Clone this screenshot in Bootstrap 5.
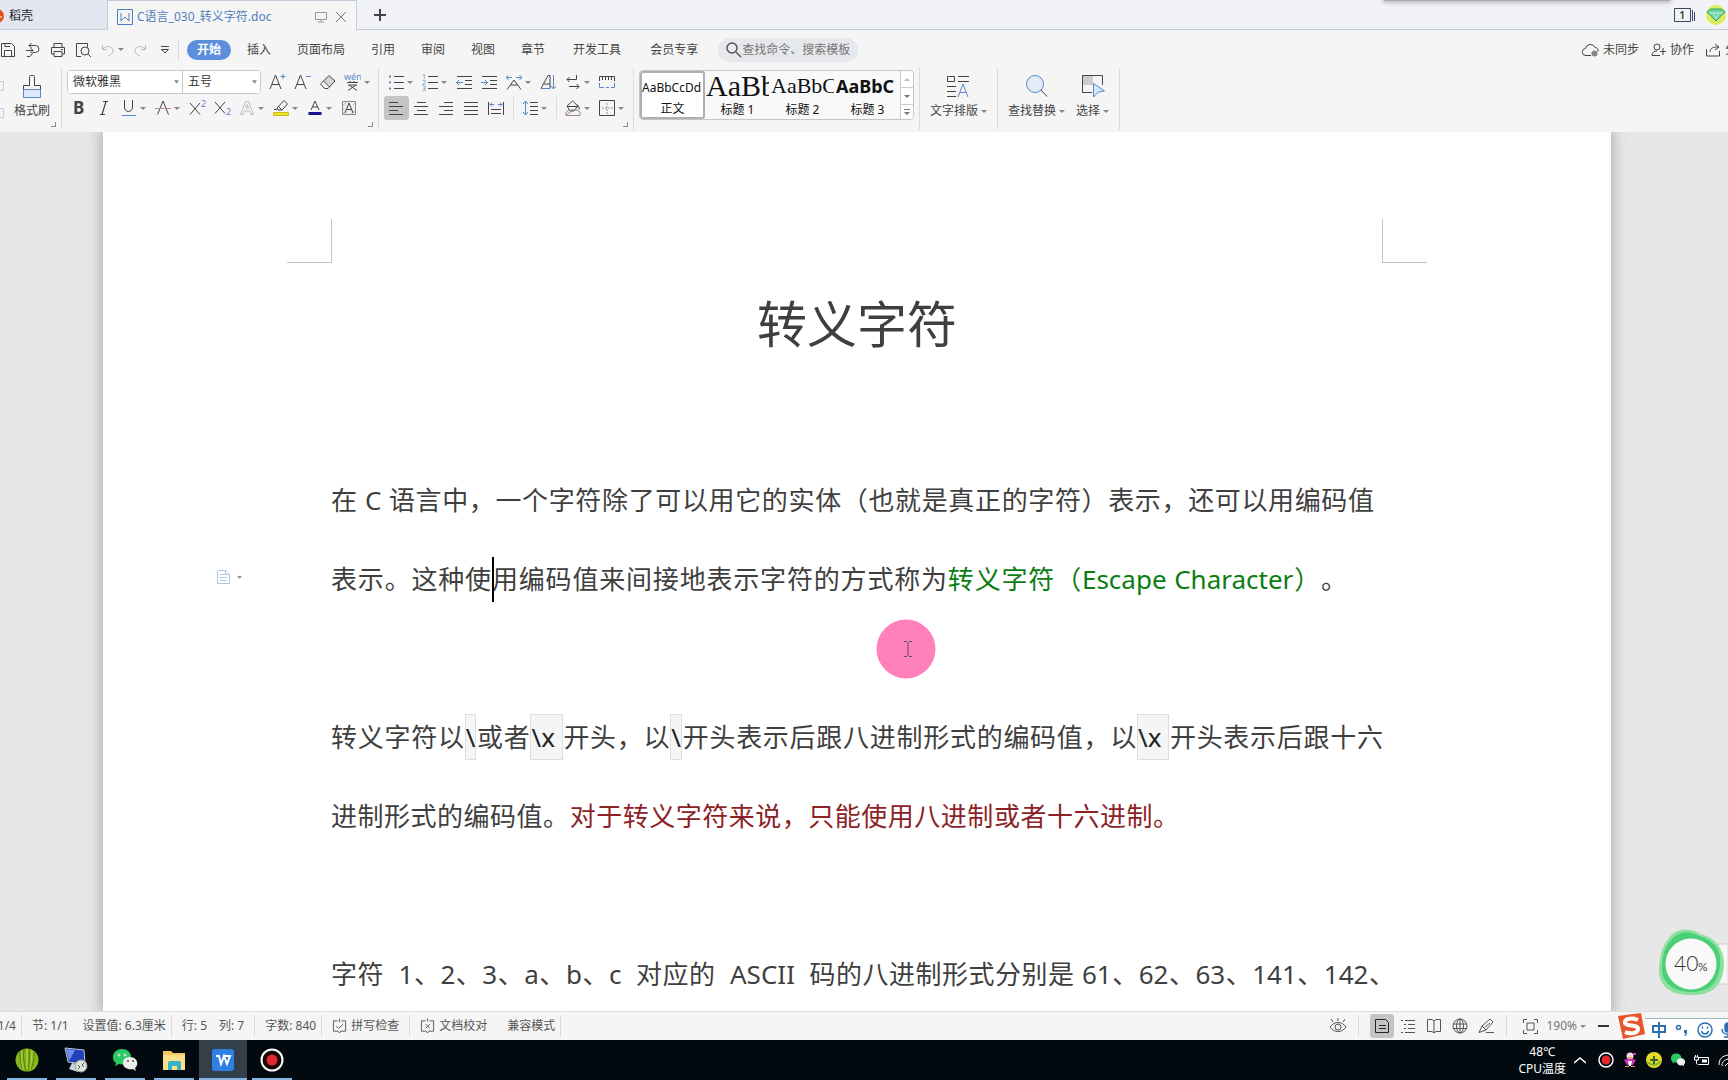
<!DOCTYPE html>
<html lang="zh-CN">
<head>
<meta charset="utf-8">
<meta name="viewport" content="width=device-width, initial-scale=1">
<title>C语言_030_转义字符.doc</title>
<link href="https://cdn.jsdelivr.net/npm/bootstrap@5.3.0/dist/css/bootstrap.min.css" rel="stylesheet">
<style>
  :root { --ui: "Noto Sans", "Noto Sans CJK SC", sans-serif; --line: #dcdcdc; --ink: #444; --blue: #5b87c5; }
  body { font-family: var(--ui); font-size: 12px; line-height: 16px; color: var(--ink); background: #e7e7e7; }
  svg { display: block; flex: none; fill: none; }
  svg:not([stroke]) { stroke: currentColor; }
  svg text { stroke: none; fill: currentColor; font-family: var(--ui); }
  button { font: inherit; color: inherit; background: none; border: 0; padding: 0; }
  .vr-line { width: 1px; background: var(--line); flex: none; }
  .caret::after { content: ""; border: 3px solid transparent; border-top-color: #888; border-bottom: 0; flex: none; margin-left: 3px; }

  /* tab strip */
  .tabstrip { height: 30px; background: #f0f2f6; border-bottom: 1px solid #c3ccdb; }
  .tab-home { width: 107px; height: 29px; padding-top: 3px; background: #e3e6ef; overflow: hidden; }
  .tab-doc { width: 250px; height: 30px; background: #f5f5f5; border: 1px solid #c3ccdb; border-bottom: 0; padding: 2px 9px 0; color: #5080bb; }
  .floatbar { right: 58px; width: 286px; height: 1px; background: #aaa; box-shadow: 0 0 4px 1px #999; }

  /* menu */
  .menubar { height: 38px; background: #f5f5f5; padding-top: 1px; }
  .quick { gap: 9px; width: 178px; }
  .menus { gap: 26px; margin-left: 26px; }
  .menus.wide { gap: 29px; margin-left: 28px; margin-right: 20px; }
  .menu-link { color: var(--ink); text-decoration: none; }
  .menu-link.current { background: #5b8edb; color: #fff; font-weight: 600; border-radius: 10px; padding: 2px 10px; }
  .finder { background: #e6e8ec; border-radius: 12px; width: 140px; height: 24px; padding: 0 8px; }
  .finder input { border: 0; background: none; padding: 0; width: 110px; font-size: 12px; outline: 0; color: #666; }
  .finder input::placeholder { color: #757575; opacity: 1; }

  /* ribbon */
  .ribbon { height: 64px; background: #f5f5f5; }
  .ribbon > .vr-line { height: 62px; }
  .grp { height: 62px; padding: 2px 0 0 5px; position: relative; flex: none; }
  .grp.launch::after { content: ""; position: absolute; right: 5px; bottom: 3px; width: 5px; height: 5px; border: solid #888; border-width: 0 1px 1px 0; }
  .tool-row { height: 24px; margin-bottom: 2px; }
  .tb { width: 25px; height: 24px; padding-left: 4px; display: flex; align-items: center; border-radius: 3px; flex: none; }
  .tb.caret { width: 34px; }
  .tb.on { background: #c4c4c4; }
  .combo { width: 194px; height: 24px; margin-right: 4px; border: 1px solid #c8c8c8; border-radius: 4px; background: #fff; overflow: hidden; flex: none; }
  .combo select { font-size: 12px; line-height: 18px; padding: 2px 14px 2px 5px; border: 0; border-radius: 0; color: #333; min-height: 0; background-color: #fff;
    background-image: url("data:image/svg+xml,%3Csvg xmlns='http://www.w3.org/2000/svg' viewBox='0 0 6 4'%3E%3Cpath d='M0 0h6L3 4z' fill='%23888'/%3E%3C/svg%3E"); background-size: 5px 4px; background-position: right 3px center; }
  .combo .face { width: 115px; border-right: 1px solid #c8c8c8; }
  .combo .pts { flex: 1; }
  .gallery { width: 275px; height: 50px; border: 1px solid #c4c4c4; border-radius: 4px; overflow: hidden; background: #f9f9f9; color: #111; }
  .sty { width: 65px; height: 48px; overflow: hidden; white-space: nowrap; display: flex; flex-direction: column; justify-content: space-between; align-items: stretch; padding: 0 1px 1px; color: #111; }
  .sty.on { border: 2px solid #b0b0b0; border-radius: 3px; padding: 0; background: #fff; }
  .sty b, .sty i { font-style: normal; font-weight: 400; height: 30px; line-height: 30px; overflow: hidden; text-align: left; }
  .big { height: 50px; display: flex; flex-direction: column; align-items: center; justify-content: space-between; padding: 2px 0 1px; white-space: nowrap; }

  /* document */
  .canvas { background: #e7e7e7; padding-right: 14px; }
  .sheet { width: 1508px; flex: none; background: #fff; box-shadow: 0 0 12px 3px #b4b4b4; padding: 87px 184px 0; color: #3f3f3f; }
  .crop { width: 45px; height: 44px; border: solid #c4c4c4; border-width: 0 1px 1px 0; }
  .crop.r { border-width: 0 0 1px 1px; }
  .prose { padding: 0 44px; font-size: 26px; text-spacing-trim: space-all; }
  .prose h1 { font-size: 50px; line-height: 80px; font-weight: 400; margin: 21px 0 97px; text-align: center; }
  .prose p { line-height: 79px; margin: 0 0 79px; }
  .ln { display: block; text-align: justify; text-align-last: justify; white-space: nowrap; position: relative; }
  .end-s { padding-right: 9px; }
  .end-a { padding-right: 36px; }
  .end-b { padding-right: 204px; }
  .hang { margin-right: -12px; }
  .esc { background: #f5f5f5; border: 1px solid #dedede; padding: 4px 0; line-height: 36px; display: inline-block; color: #222; white-space: pre; text-align-last: left; }
  .term { color: #0b7d12; }
  .warn { color: #8c2226; }
  .ibeam { position: relative; }
  .ibeam::after { content: ""; position: absolute; left: 0; top: -4px; width: 2px; height: 45px; background: #000; }
  .para-mark { left: -114px; top: 29px; }
  .pointer { left: 545px; top: 79px; }
  .gauge { right: 1px; bottom: 12px; }

  /* status + taskbar */
  .status { height: 29px; background: #f5f5f5; border-top: 1px solid #ddd; color: #555; white-space: nowrap; }
  .status .vr-line { height: 22px; }
  .cell { padding: 0 10px; display: flex; align-items: center; gap: 4px; }
  .cell.tight { padding-right: 5px; }
  .view { width: 24px; height: 24px; display: flex; align-items: center; justify-content: center; border-radius: 3px; }
  .view.on { background: #c4c4c4; }
  .ime { width: 83px; height: 22px; background: #fff; border-top: 1px solid #9bb; color: #2b70b5; padding-left: 6px; }
  .taskbar { height: 40px; background: #020a10; color: #fff; padding-left: 7px; }
  .app { width: 40px; height: 40px; margin-right: 9px; border-bottom: 2px solid #85b4e0; display: flex; align-items: center; justify-content: center; padding-top: 1px; }
  .app.on { width: 48px; background: #33404a; margin-right: 5px; margin-left: -4px; }
</style>
</head>
<body class="d-flex flex-column vh-100 overflow-hidden">

<header>
  <div class="tabstrip d-flex position-relative">
    <a href="#" class="tab-home d-flex align-items-center text-decoration-none text-dark">
      <svg width="9" height="16" viewBox="0 0 9 16"><circle cx="-3" cy="8" r="7" fill="#e2521b" stroke="none"/><path d="M0 9l2 0" stroke="#fff"/></svg>稻壳</a>
    <div class="tab-doc d-flex align-items-center">
      <svg width="16" height="16" viewBox="0 0 16 16" stroke="#5080bb"><path d="M.5.5h15v15H.5z"/><path d="M4 4v8l4-4 4 4V4" /></svg>
      <span class="ms-1 me-auto">C语言_030_转义字符.doc</span>
      <svg width="12" height="12" viewBox="0 0 12 12" stroke="#999"><path d="M.5 1.500h11v7H.5zM6 8.500v2M3 11h6"/></svg>
      <button class="ms-2" aria-label="关闭"><svg width="12" height="12" viewBox="0 0 12 12" stroke="#777"><path d="M1 1l10 10M11 1L1 11"/></svg></button>
    </div>
    <button class="ms-3" aria-label="新建"><svg width="14" height="14" viewBox="0 0 14 14" stroke="#444" stroke-width="2"><path d="M7 1v12M1 7h12"/></svg></button>
    <div class="d-flex align-items-center ms-auto gap-2">
      <svg width="22" height="16" viewBox="0 0 22 16" stroke="#3a4766"><path d="M.5 1.500h16v13H.5zM18.500 3v11M20.500 5v9"/><text x="5" y="12" font-size="11" font-weight="600">1</text></svg>
      <svg width="24" height="20" viewBox="0 0 24 20"><circle cx="12" cy="10" r="10" fill="#dcec5a" stroke="none"/><path d="M3 7l4-3h10l4 3-9 9z" fill="#6cd3a0" stroke="#2f9e73"/><path d="M5 8h14M9 8l3 6 3-6" stroke="#c6f3dd"/></svg>
    </div>
    <div class="floatbar position-absolute top-0"></div>
  </div>

  <nav class="menubar d-flex align-items-center">
    <div class="quick d-flex align-items-center flex-shrink-0">
      <button aria-label="保存"><svg width="16" height="16" viewBox="0 0 16 16"><path d="M1.500 1.500h10l3 3v10h-13zM4.500 14V8.500h7V14M5 1.500v3h5"/></svg></button>
      <button aria-label="输出"><svg width="16" height="16" viewBox="0 0 16 16"><path d="M4 3.500h6.500a3.500 3.500 0 010 7H8M1 8.500h7M5.500 6L8 8.500 5.500 11M6.500 1L4 3.500 6.500 6M2 14.500h3l3-4"/></svg></button>
      <button aria-label="打印"><svg width="16" height="16" viewBox="0 0 16 16"><path d="M4 5V1.500h8V5M4 12H1.500V5.500h13V12H12M4 9.500h8v5H4zM11 7.500h2"/></svg></button>
      <button aria-label="打印预览"><svg width="17" height="16" viewBox="0 0 17 16"><path d="M6 14.500H1.500v-13h11V5M16 15l-3-3"/><circle cx="10" cy="9" r="4"/></svg></button>
      <button aria-label="撤销" class="caret d-flex align-items-center"><svg width="14" height="14" viewBox="0 0 14 14" stroke="#bbb"><path d="M1.500 2v4.500H6M2 6c3-4 10-3 10 2 0 2-2 4-5 5"/></svg></button>
      <button aria-label="重做"><svg width="14" height="14" viewBox="0 0 14 14" stroke="#bbb"><path d="M12.500 2v4.500H8M12 6C9 2 2 3 2 8c0 2 2 4 5 5"/></svg></button>
      <button class="ms-1" aria-label="更多"><svg width="10" height="10" viewBox="0 0 10 10"><path d="M1 1.500h8M1.500 4.500L5 8l3.500-3.500z"/></svg></button>
    </div>
    <div class="vr-line me-2" style="height:22px"></div>
    <a href="#" class="menu-link current">开始</a>
    <a href="#" class="menu-link ms-3">插入</a>
    <div class="d-flex menus">
      <a href="#" class="menu-link">页面布局</a><a href="#" class="menu-link">引用</a><a href="#" class="menu-link">审阅</a><a href="#" class="menu-link">视图</a><a href="#" class="menu-link">章节</a>
    </div>
    <div class="d-flex menus wide">
      <a href="#" class="menu-link">开发工具</a><a href="#" class="menu-link">会员专享</a>
    </div>
    <div class="finder d-flex align-items-center">
      <label for="cmd"><svg width="16" height="16" viewBox="0 0 16 16" stroke="#555" stroke-width="1.500"><circle cx="6" cy="6" r="5"/><path d="M10 10l5 5"/></svg></label>
      <input id="cmd" type="text" placeholder="查找命令、搜索模板">
    </div>
    <div class="d-flex align-items-center ms-auto gap-1 text-nowrap">
      <svg width="17" height="14" viewBox="0 0 17 14"><path d="M9 12.500H4a3.500 3.500 0 01-.5-7 5 5 0 019.500-1 3.500 3.500 0 013 4"/><circle cx="12.500" cy="10.500" r="3" fill="#888" stroke="none"/></svg>
      <a href="#" class="menu-link me-2">未同步</a>
      <svg width="15" height="14" viewBox="0 0 15 14"><circle cx="6" cy="4" r="3"/><path d="M9 12.500H1C1 9.500 3 8 6 8M12 5v7M9 8.500h6"/></svg>
      <a href="#" class="menu-link me-2">协作</a>
      <svg width="15" height="14" viewBox="0 0 15 14"><path d="M.5 6v7h13V8M4 9c0-4 3-5 8-5M9 1l4 3-4 3"/></svg>
      <a href="#" class="menu-link overflow-hidden" style="width:3px">分享</a>
    </div>
  </nav>

  <div class="ribbon d-flex align-items-start">
    <div class="d-flex grp launch ps-0" style="width:61px">
      <svg width="6" height="50" viewBox="0 0 6 50" stroke="#ccc"><path d="M0 11.500h3.500v9H0M0 38.500h3.500v9H0"/></svg>
      <button class="big ms-2"><svg width="20" height="26" viewBox="0 0 20 26"><path d="M1.500 18V13.500h6v-9a1 1 0 011-1h3a1 1 0 011 1v9h6V18"/><path d="M1.500 17.500h17v8h-17z" fill="#dfeaf8" stroke="#5b87c5"/></svg><span>格式刷</span></button>
    </div>
    <div class="vr-line"></div>

    <div class="grp launch" style="width:316px">
      <div class="d-flex tool-row">
        <div class="combo d-flex">
          <label class="visually-hidden" for="face">字体</label>
          <select id="face" class="form-select face"><option>微软雅黑</option></select>
          <label class="visually-hidden" for="pts">字号</label>
          <select id="pts" class="form-select pts"><option>五号</option></select>
        </div>
        <button class="tb" aria-label="增大字号"><svg width="17" height="18" viewBox="0 0 17 18"><path d="M1 16L6.500 2 12 16M3 11.500h7"/><path d="M11.500 3.500h5M14 1v5" stroke="#5b87c5"/></svg></button>
        <button class="tb" aria-label="减小字号"><svg width="17" height="18" viewBox="0 0 17 18"><path d="M1 16L6.500 2 12 16M3 11.500h7"/><path d="M12 3.500h5" stroke="#5b87c5"/></svg></button>
        <button class="tb" aria-label="清除格式"><svg width="17" height="16" viewBox="0 0 17 16"><path d="M10 1.500l6 5.500-5.500 6-6-6z" fill="#d5d5d5"/><path d="M4.500 7L1.500 10l4 4.500H9l1.500-1.500"/></svg></button>
        <button class="tb caret" aria-label="拼音指南"><svg width="17" height="18" viewBox="0 0 17 18"><text x="0" y="7" font-size="9" style="fill:#5b87c5">wén</text><path d="M3 9.500h11M4 12h9M6 8v2M10 8v2M5 12l8 5.500M12 12l-8 5.500"/></svg></button>
      </div>
      <div class="d-flex tool-row">
        <button class="tb" aria-label="加粗"><svg width="16" height="18" viewBox="0 0 16 18"><text x="2" y="15" font-size="17" font-weight="700">B</text></svg></button>
        <button class="tb" aria-label="倾斜"><svg width="16" height="16" viewBox="0 0 16 16"><path d="M7 1.500h5M4 14.500h5M10 1.500l-4 13" stroke-width="1.200"/></svg></button>
        <button class="tb caret" aria-label="下划线"><svg width="16" height="16" viewBox="0 0 16 16"><path d="M3.500 0v7c0 6 8 6 8 0V0"/><path d="M1 15.500h14" stroke="#5b87c5"/></svg></button>
        <button class="tb caret" aria-label="删除线"><svg width="16" height="16" viewBox="0 0 16 16"><path d="M2.500 14.500L8 1l5.500 13.500"/><path d="M0 8.500h16" stroke="#b98a80"/></svg></button>
        <button class="tb" aria-label="上标"><svg width="18" height="16" viewBox="0 0 18 16"><path d="M1 3l10 11.500M11 3L1 14.500"/><text x="12" y="7" font-size="9" style="fill:#5b87c5">2</text></svg></button>
        <button class="tb" aria-label="下标"><svg width="18" height="16" viewBox="0 0 18 16"><path d="M1 2l10 11.500M11 2L1 13.500"/><text x="12" y="15" font-size="9" style="fill:#5b87c5">2</text></svg></button>
        <button class="tb caret" aria-label="文字效果"><svg width="16" height="16" viewBox="0 0 16 16" stroke="#bbb"><path d="M1.500 14.500L6.500 1.500h3l5 13H12L10.500 11h-5L4 14.500zM6.500 8h3L8 4.500z"/></svg></button>
        <button class="tb caret" aria-label="突出显示"><svg width="16" height="16" viewBox="0 0 16 16"><path d="M11 .500L14.500 4 9 10H5L4 8zM5 6l4 4M4 9.500H1"/><path d="M.5 12.500h15v3H.5z" fill="#f3e62a" stroke="#c9bd1c"/></svg></button>
        <button class="tb caret" aria-label="字体颜色"><svg width="16" height="16" viewBox="0 0 16 16"><path d="M4 10L8 1l4 9M5.500 7h5"/><path d="M1.500 13.500h13" stroke="#14148c" stroke-width="3"/></svg></button>
        <button class="tb" aria-label="字符底纹"><svg width="16" height="16" viewBox="0 0 16 16"><path d="M1.500 1.500h13v13h-13z" stroke="#888" fill="#eee"/><path d="M1.500 6L6 1.500M10 14.500l4.500-4.500M1.500 10L3 8.500M12 5l2.500-2.500M1.500 14L4 11.500" stroke="#aaa"/><path d="M4 13L8 3l4 10M5.500 9.500h5"/></svg></button>
      </div>
    </div>
    <div class="vr-line"></div>

    <div class="grp launch" style="width:254px">
      <div class="d-flex tool-row">
        <button class="tb caret" aria-label="项目符号"><svg width="16" height="16" viewBox="0 0 16 16"><path d="M6 2.500h10M6 8.500h10M6 14.500h10"/><path d="M1 2.500h2M1 8.500h2M1 14.500h2" stroke="#5b87c5" stroke-width="2"/></svg></button>
        <button class="tb caret" aria-label="编号"><svg width="16" height="18" viewBox="0 0 16 18"><path d="M6 3.500h10M6 9.500h10M6 15.500h10"/><g font-size="7"><text x="0" y="6" style="fill:#5b87c5">1</text><text x="0" y="12" style="fill:#5b87c5">2</text><text x="0" y="18" style="fill:#5b87c5">3</text></g></svg></button>
        <button class="tb" aria-label="减少缩进"><svg width="16" height="16" viewBox="0 0 16 16"><path d="M1 2.500h15M9 6.500h7M9 10.500h7M1 14.500h15"/><path d="M0 8.500h7M3 6L.5 8.500 3 11" stroke="#5b87c5"/></svg></button>
        <button class="tb" aria-label="增加缩进"><svg width="16" height="16" viewBox="0 0 16 16"><path d="M1 2.500h15M9 6.500h7M9 10.500h7M1 14.500h15"/><path d="M0 8.500h7M4 6l2.500 2.500L4 11" stroke="#5b87c5"/></svg></button>
        <button class="tb caret" aria-label="中文版式"><svg width="16" height="16" viewBox="0 0 16 16"><path d="M1 15.500L8 6l7 9.500M4.500 11h7"/><path d="M0 3.500h6M2.500 1L0 3.500 2.500 6M10 3.500h6M13.500 1L16 3.500 13.500 6" stroke="#5b87c5"/></svg></button>
        <button class="tb" aria-label="排序"><svg width="16" height="16" viewBox="0 0 16 16"><path d="M1 14.500L8 1.500h2v13M4 10h6"/><path d="M1 14.500h9M13.500 1v13.500M11 12l2.500 3 2.500-3" stroke="#5b87c5"/></svg></button>
        <button class="tb caret" aria-label="显示编辑标记"><svg width="16" height="16" viewBox="0 0 16 16"><path d="M11.500 1v4.500H2M4.500 3L2 5.500 4.500 8M4 12.500h10M11.500 10l2.500 2.500-2.500 2.500"/></svg></button>
        <button class="tb" aria-label="制表位"><svg width="16" height="14" viewBox="0 0 16 14"><path d="M.5 6V1.500h15V6M3.500 2v3M6.500 2v3M9.500 2v3M12.500 2v3"/><path d="M.5 8v4.500H5M7 12.500h3M12 12.500h3.500V8" stroke="#5b87c5"/></svg></button>
      </div>
      <div class="d-flex tool-row align-items-center">
        <button class="tb on" aria-label="左对齐"><svg width="16" height="16" viewBox="0 0 16 16"><path d="M1 2.500h9M1 6.500h14M1 10.500h9M1 14.500h14"/></svg></button>
        <button class="tb" aria-label="居中"><svg width="16" height="16" viewBox="0 0 16 16"><path d="M4 2.500h9M1 6.500h14M4 10.500h9M1 14.500h14"/></svg></button>
        <button class="tb" aria-label="右对齐"><svg width="16" height="16" viewBox="0 0 16 16"><path d="M6 2.500h9M1 6.500h14M6 10.500h9M1 14.500h14"/></svg></button>
        <button class="tb" aria-label="两端对齐"><svg width="16" height="16" viewBox="0 0 16 16"><path d="M1 2.500h14M1 6.500h14M1 10.500h14M1 14.500h14"/></svg></button>
        <button class="tb" aria-label="分散对齐"><svg width="16" height="16" viewBox="0 0 16 16"><path d="M.5 2v13M15.500 2v13M3 9.500h10M3 13.500h10"/><path d="M2 4.500h4M4 2.500l-2 2 2 2M10 4.500h4M12 2.500l2 2-2 2" stroke="#5b87c5"/></svg></button>
        <div class="vr-line mx-1" style="height:22px"></div>
        <button class="tb caret" aria-label="行距"><svg width="16" height="16" viewBox="0 0 16 16"><path d="M8 2.500h8M8 6.500h8M8 10.500h8M8 14.500h8"/><path d="M3.500 1v14M1 4l2.500-3L6 4M1 12l2.500 3L6 12" stroke="#5b87c5"/></svg></button>
        <div class="vr-line mx-1" style="height:22px"></div>
        <button class="tb caret" aria-label="底纹颜色"><svg width="16" height="16" viewBox="0 0 16 16"><path d="M7.500 1L13 6l-4 5H5L2 6zM12 5c3 1 2 4 2 5M2.500 6.500H13"/><path d="M1 12c4-3 10-3 14 0v3.500H1zM1 15l6-4" stroke="#a08a8a"/></svg></button>
        <button class="tb caret" aria-label="边框"><svg width="16" height="16" viewBox="0 0 16 16"><path d="M.5.500h15v15H.5z"/><path d="M8 3v11M3 8h11" stroke-dasharray="2 1" stroke="#999"/></svg></button>
      </div>
    </div>
    <div class="vr-line"></div>

    <div class="grp" style="width:285px">
      <div class="gallery d-flex">
        <button class="sty on"><b style="font-size:12px">AaBbCcDd</b><span>正文</span></button>
        <button class="sty"><i style="font:30px/30px 'Liberation Serif',serif">AaBb</i><span>标题 1</span></button>
        <button class="sty"><i style="font:22px/30px 'Liberation Serif',serif">AaBbC</i><span>标题 2</span></button>
        <button class="sty flex-shrink-1"><b style="font-size:18px;font-weight:700">AaBbC</b><span>标题 3</span></button>
        <svg class="ms-auto bg-white" width="13" height="48" viewBox="0 0 13 48" stroke="#ccc"><path d="M.5 0v48M0 16.500h13M0 33.500h13"/><path d="M4 10l3-3 3 3z" fill="#bbb" stroke="none"/><path d="M4 24h6l-3 3zM4 41h6l-3 3zM4 38h6v1H4z" fill="#777" stroke="none"/></svg>
      </div>
    </div>
    <div class="vr-line"></div>

    <div class="grp d-flex justify-content-center ps-0" style="width:77px">
      <button class="big"><svg width="24" height="26" viewBox="0 0 24 26"><path d="M1.500 4.500h7v5h-7zM12 4.500h11M12 9.500h11M1 14.500h9M1 19.500h9M1 24.500h9"/><path d="M12 25l5-13 5 13M14 20.500h6" stroke="#5b87c5"/></svg><span class="caret d-flex align-items-center">文字排版</span></button>
    </div>
    <div class="vr-line"></div>
    <div class="grp d-flex" style="width:121px;gap:11px;padding-left:10px">
      <button class="big"><svg width="24" height="26" viewBox="0 0 24 26"><circle cx="10" cy="12" r="8.500" fill="#e3ebf7" stroke="#5b87c5"/><path d="M16 18l6 6.500"/></svg><span class="caret d-flex align-items-center">查找替换</span></button>
      <button class="big"><svg width="24" height="26" viewBox="0 0 24 26"><path d="M2 4h10v9H2z" fill="#ccc" stroke="none"/><path d="M11 20.500H1.500v-17h20V13"/><path d="M12.500 11.500l11 7.500-6 1-5 5z" fill="#d6e6f8" stroke="#5b87c5"/></svg><span class="caret d-flex align-items-center">选择</span></button>
    </div>
    <div class="vr-line"></div>
  </div>
</header>

<main class="canvas d-flex justify-content-center flex-fill overflow-hidden position-relative">
  <article class="sheet">
    <div class="d-flex justify-content-between"><div class="crop"></div><div class="crop r"></div></div>
    <div class="prose">
      <h1>转义字符</h1>
      <p class="position-relative"><span class="ln end-s">在 C 语言中，一个字符除了可以用它的实体（也就是真正的字符）表示，还可以用编码值</span><span class="ln end-a"><svg class="para-mark position-absolute" width="26" height="16" viewBox="0 0 26 16" stroke="#b4c6dc"><path d="M.5 1.500h8l4 4v9H.5zM3 5.500h5M3 8.500h7M3 11.500h7M8.500 1.500v4h4"/><path d="M20 7h5l-2.500 3z" fill="#999" stroke="none"/></svg>表示。这种使<span class="ibeam"></span>用编码值来间接地表示字符的方式称为<span class="term">转义字符（Escape Character）</span>。<svg class="pointer position-absolute" width="60" height="60" viewBox="0 0 60 60"><circle cx="30" cy="30" r="29.500" fill="#ff80bb" stroke="none"/><path d="M28 22.500h3M33 22.500h3M32 23v14M28 37.500h3M33 37.500h3" stroke="#555"/></svg></span></p>
      <p><span class="ln">转义字符以<span class="esc">\</span>或者<span class="esc">\x </span>开头，以<span class="esc">\</span>开头表示后跟八进制形式的编码值，以<span class="esc">\x </span>开头表示后跟十六</span><span class="ln end-b">进制形式的编码值。<span class="warn">对于转义字符来说，只能使用八进制或者十六进制。</span></span></p>
      <p><span class="ln hang">字符&nbsp; 1、2、3、a、b、c&nbsp; 对应的&nbsp; ASCII&nbsp; 码的八进制形式分别是 61、62、63、141、142、</span></p>
    </div>
  </article>
  <svg class="gauge position-absolute" width="70" height="70" viewBox="0 0 70 70"><path d="M61 15h12v40H58z" fill="#f7f7f7" stroke="#ccc"/><path d="M12 9C20-2 35-1 43 5c14 3 24 14 24 29 0 20-10 32-30 32C15 67 1 58 2 39 3 29 4 18 12 9z" fill="#8de0a0" stroke="none"/><path d="M15 10C25 0 35 3 42 7c15 4 23 15 21 28-1 19-11 28-28 28C15 63 4 53 5 37c0-10 3-20 10-27z" fill="#4bd077" stroke="none"/><circle cx="34" cy="35" r="25.500" fill="#f9f9f9" stroke="none"/><text x="17" y="42" font-size="21" style="font-family:Lato,sans-serif;font-weight:300;fill:#333">40</text><text x="41" y="42" font-size="12" style="font-family:Lato,sans-serif">%</text></svg>
</main>

<footer>
  <div class="status d-flex align-items-center">
    <div class="d-flex justify-content-end overflow-hidden" style="width:21px;padding-right:5px">1/4</div><div class="vr-line"></div>
    <div class="cell tight" style="gap:14px"><span>节: 1/1</span><span>设置值: 6.3厘米</span></div><div class="vr-line"></div>
    <div class="cell" style="gap:12px"><span>行: 5</span><span>列: 7</span></div><div class="vr-line"></div>
    <div class="cell tight"><span>字数: 840</span></div><div class="vr-line"></div>
    <div class="cell"><svg width="15" height="16" viewBox="0 0 16 16"><path d="M6 2.500H1.500v11h5l1.500 2 1.500-2h5v-11H10M8 0v4M4.500 8l2.500 2.500L12 6"/></svg>拼写检查</div><div class="vr-line"></div>
    <div class="cell"><svg width="15" height="16" viewBox="0 0 16 16"><path d="M6 2.500H1.500v11h5l1.500 2 1.500-2h5v-11H10M8 0v3M6 6l4.500 4.500M10.500 6L6 10.500"/></svg>文档校对</div>
    <div class="cell tight">兼容模式</div><div class="vr-line"></div>

    <div class="d-flex align-items-center ms-auto">
      <svg class="me-2" width="24" height="16" viewBox="0 0 24 16"><path d="M4 9c4-6 12-6 16 0-4 6-12 6-16 0zM12 3V0M7 4L5 1M17 4l2-3"/><circle cx="12" cy="9" r="3"/></svg>
      <div class="vr-line me-2"></div>
      <div class="d-flex" style="gap:2px;padding-left:3px">
        <button class="view on" aria-label="页面视图"><svg width="16" height="16" viewBox="0 0 16 16" stroke="#222"><path d="M1.500 1.500h10l3 3v10h-13zM5 7.500h7M5 10.500h7"/></svg></button>
        <button class="view" aria-label="大纲"><svg width="16" height="16" viewBox="0 0 16 16"><path d="M1 2.500h2M5 2.500h10M4 6.500h2M8 6.500h7M4 10.500h2M8 10.500h7M1 14.500h2M5 14.500h10"/></svg></button>
        <button class="view" aria-label="阅读版式"><svg width="16" height="16" viewBox="0 0 16 16"><path d="M1.500 1.500H6L8 3l2-1.500h4.500v12H10L8 15l-2-1.500H1.500zM8 3v12"/></svg></button>
        <button class="view" aria-label="Web版式"><svg width="16" height="16" viewBox="0 0 16 16"><circle cx="8" cy="8" r="7"/><ellipse cx="8" cy="8" rx="3.500" ry="7"/><path d="M1 6h14M1 10.500h14M8 1v14"/></svg></button>
        <button class="view" aria-label="写作模式"><svg width="17" height="16" viewBox="0 0 17 16"><path d="M1 14.500L4 8l8-7 3 3-7 8zM4 8l4 4M12 5L7 9M8 14.500h8"/></svg></button>
      </div>
      <div class="vr-line ms-2 me-3"></div>
      <svg width="15" height="15" viewBox="0 0 15 15"><path d="M.5 4V.500H4M11 .500h3.500V4M14.500 11v3.500H11M4 14.500H.5V11M4 4h7v7H4z"/></svg>
      <button class="caret d-flex align-items-center ms-2" style="color:#777">190%</button>
      <button class="ms-2 ps-1" aria-label="缩小"><svg width="11" height="4" viewBox="0 0 11 4" stroke="#333" stroke-width="2"><path d="M0 2h11"/></svg></button>
      <svg class="ms-2" width="28" height="28" viewBox="0 0 28 28"><path d="M1 4l23-3 4 21-22 5z" fill="#e8552b" stroke="none"/><path d="M21 8C14 5 7 7 8 11c1 4 13 1 13 6 0 5-9 5-13 3" stroke="#fff" stroke-width="4"/></svg>
      <div class="ime d-flex align-items-center gap-2 align-self-end overflow-hidden">
        <svg width="16" height="16" viewBox="0 0 16 16" stroke-width="2"><path d="M2 4h12v6H2zM8 0v16"/></svg>
        <svg width="14" height="14" viewBox="0 0 14 14"><circle cx="3.500" cy="4.500" r="2" stroke-width="1.500"/><path d="M9 7h3v3c0 2-1 3-3 3 1-1 1.500-2 1.500-3H9z" fill="currentColor" stroke="none"/></svg>
        <svg width="16" height="16" viewBox="0 0 16 16" stroke-width="1.500"><circle cx="8" cy="8" r="7"/><path d="M4.500 9c1 4 6 4 7 0M5.500 4.500v2M10.500 4.500v2"/></svg>
        <svg width="13" height="16" viewBox="0 0 13 16" stroke-width="1.500"><rect x="4" y="1" width="6" height="9" rx="3" fill="currentColor"/><path d="M1 7c0 7 12 7 12 0M7 12v3M3 15h8"/></svg>
      </div>
    </div>
  </div>

  <div class="taskbar d-flex align-items-center">
    <button class="app" aria-label="应用"><svg width="24" height="24" viewBox="0 0 24 24"><circle cx="12" cy="12" r="11.500" fill="#86b51d" stroke="none"/><path d="M5 4c0 6 1 11 2 17M9 1c-1 8 0 15 2 22M14 1c1 8 0 15-1 22M19 4c1 6-1 12-3 17" stroke="#4c7d0b"/><path d="M7 3c-1 7 0 12 1 18M12 1v21M17 3c0 7-1 12-2 18" stroke="#b9d94a"/></svg></button>
    <button class="app" aria-label="远程桌面"><svg width="24" height="26" viewBox="0 0 24 26"><path d="M1 1l19 2 1 14L4 15z" fill="#2340b8" stroke="#b9c6dc"/><path d="M2 2l9 1-6 11z" fill="#6f8ee6" stroke="none"/><path d="M8 16l-3 6 9 3 1-8z" fill="#ccd3dc" stroke="none"/><circle cx="17" cy="19" r="6" fill="#dfe3df" stroke="#999"/><path d="M14 18l2 2-2 2M20 16l-2 2 2 2" stroke="#386838"/></svg></button>
    <button class="app" aria-label="微信"><svg width="26" height="24" viewBox="0 0 26 24"><path d="M10 1c-5 0-9 3-9 8 0 3 1 5 3 6l-1 3 4-2c8 2 12-3 12-7 0-5-4-8-9-8z" fill="#2bc866" stroke="none"/><circle cx="7" cy="7" r="1" fill="#064"/><circle cx="13" cy="7" r="1" fill="#064"/><path d="M18 9c-4 0-7 2-7 6 0 5 5 7 10 6l3 2-1-3c5-5 1-11-5-11z" fill="#eef0ee" stroke="none"/><path d="M15 13h2M20 13h2" stroke="#777" stroke-width="2"/></svg></button>
    <button class="app" aria-label="文件资源管理器"><svg width="24" height="22" viewBox="0 0 24 22"><path d="M1 2h8l2 2h12v17H1z" fill="#f2c95e" stroke="none"/><path d="M1 6h22v15H1z" fill="#fbe08b" stroke="none"/><path d="M6 21v-7a2 2 0 012-2h9a2 2 0 012 2v7h-4v-4h-5v4z" fill="#37b3c3" stroke="none"/></svg></button>
    <button class="app on" aria-label="WPS"><svg width="22" height="22" viewBox="0 0 22 22"><rect width="22" height="22" rx="3" fill="#2f80e6" stroke="none"/><path d="M4 7h3l2 8 3-8 3 8 3-8h-7" stroke="#fff" stroke-width="2"/></svg></button>
    <button class="app" aria-label="录屏"><svg width="24" height="24" viewBox="0 0 24 24"><circle cx="12" cy="12" r="10.500" fill="#160809" stroke="#fff" stroke-width="2"/><circle cx="12" cy="12" r="5.500" fill="#e3262f" stroke="none"/></svg></button>

    <div class="d-flex align-items-center ms-auto gap-2">
      <div class="text-center" style="line-height:17px">48℃<br>CPU温度</div>
      <svg width="12" height="8" viewBox="0 0 12 8" stroke-width="1.500"><path d="M0 7l6-5 6 5"/></svg>
      <div class="d-flex align-items-center gap-2 ps-1">
      <svg width="16" height="16" viewBox="0 0 16 16"><circle cx="8" cy="8" r="7" stroke="#fff" stroke-width="1.500"/><circle cx="8" cy="8" r="4.500" fill="#e3262f" stroke="none"/></svg>
      <svg width="16" height="16" viewBox="0 0 16 16" stroke="none"><circle cx="8" cy="4" r="3.500" fill="#f4d8ea"/><path d="M2 8c4-2 8-2 12 0l-3 5H5z" fill="#d22fb4"/><path d="M6 9h4l-1 5H7z" fill="#fff"/><path d="M6 5h4v1H6zM3 14h4v1H3zM9 14h4v1H9z" fill="#f0a030"/><path d="M11 1h3v2h-3z" fill="#d22fb4"/></svg>
      <svg width="16" height="16" viewBox="0 0 16 16"><circle cx="8" cy="8" r="8" fill="#e9dc26" stroke="none"/><path d="M1 10c5 4 10 4 14-1" stroke="#7fb02a" stroke-width="2"/><path d="M8 4v8M4 8h8" stroke="#363" stroke-width="2"/></svg>
      <svg width="16" height="14" viewBox="0 0 26 24"><path d="M10 1c-5 0-9 3-9 8 0 3 1 5 3 6l-1 3 4-2c8 2 12-3 12-7 0-5-4-8-9-8z" fill="#2bc866" stroke="none"/><path d="M18 9c-4 0-7 2-7 6 0 5 5 7 10 6l3 2-1-3c5-5 1-11-5-11z" fill="#eef0ee" stroke="none"/></svg>
      <svg width="16" height="12" viewBox="0 0 16 12"><path d="M5 3.500h9.500v7H5M2.500 6v3c0 1 1 1.500 2 1.500M.5 3h4v3h-4zM1.500 1v2M3.500 1v2"/><path d="M8 5.500h5v3H8z" fill="#fff" stroke="none"/></svg>
      <svg width="10" height="14" viewBox="0 0 10 14"><path d="M1 12C1 6 4 3 10 2M4 13c0-4 2-6 6-7M7 13l3-3"/></svg>
      </div>
    </div>
  </div>
</footer>

<script src="https://cdn.jsdelivr.net/npm/bootstrap@5.3.0/dist/js/bootstrap.bundle.min.js"></script>
</body>
</html>
